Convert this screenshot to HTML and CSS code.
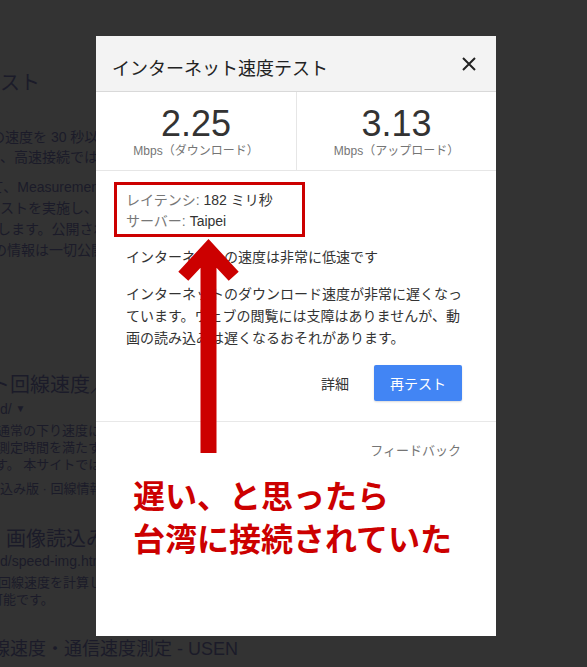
FILE: index.html
```html
<!DOCTYPE html>
<html lang="ja">
<head>
  <meta charset="utf-8">
  <title>インターネット速度テスト</title>
  <link rel="stylesheet" href="styles.css">
</head>
<body>
  <!-- page behind the dialog -->
  <div class="page">
    <div class="h l1">テスト</div>
    <div class="para p1">
      <div class="cut9">の速度を 30 秒以上かけて測定</div>
      <div>、高速接続では</div>
    </div>
    <div class="para p2">
      <div class="cut10">て、Measurement Lab と</div>
      <div>ストを実施し、インター</div>
      <div class="cut3">します。公開され</div>
      <div class="cut7">の情報は一切公開</div>
    </div>
    <div class="h l8 cut10">ト回線速度／通信速</div>
    <div class="url l9">d/ <span class="tri">▼</span></div>
    <div class="small p3">
      <div class="cut3">通常の下り速度に</div>
      <div class="cut3">測定時間を満たす</div>
      <div class="cut5">す。 本サイトでは</div>
    </div>
    <div class="small l13">込み版 · 回線情報</div>
    <div class="h l14">画像読込み版</div>
    <div class="url">d/speed-img.html</div>
    <div class="small p4">
      <div class="cut2">回線速度を計算し</div>
      <div class="cut10">可能です。</div>
    </div>
    <div class="h l18 cut8">線速度・通信速度測定 - USEN</div>
  </div>

  <div class="modal">
    <div class="head">
      <div class="title">インターネット速度テスト</div>
      <svg class="close" width="14" height="14" viewBox="0 0 14 14">
        <path d="M1 1L13 13M13 1L1 13" stroke="#222" stroke-width="2" fill="none"/>
      </svg>
    </div>
    <div class="stats">
      <div class="stat">
        <div class="num">2.25</div>
        <div class="unit">Mbps（ダウンロード）</div>
      </div>
      <div class="stat">
        <div class="num">3.13</div>
        <div class="unit">Mbps（アップロード）</div>
      </div>
    </div>
    <div class="latency">
      <div class="row"><span class="lbl">レイテンシ: </span>182 ミリ秒</div>
      <div class="row"><span class="lbl">サーバー: </span>Taipei</div>
    </div>
    <div class="verdict">インターネットの速度は非常に低速です</div>
    <div class="desc">インターネットのダウンロード速度が非常に遅くなっ<br>ています。ウェブの閲覧には支障はありませんが、動<br>画の読み込みは遅くなるおそれがあります。</div>
    <div class="actions">
      <span class="more">詳細</span>
      <button class="retest">再テスト</button>
    </div>
    <div class="foot">フィードバック</div>
    <div class="note">遅い、と思ったら<br>台湾に接続されていた</div>
  </div>

  <svg class="arrow" width="62" height="216" viewBox="0 0 62 216">
    <polygon fill="#cc0000" points="30.5,1 60.7,33.7 50.7,42.7 38.5,29.7 38.5,215 22.5,215 22.5,29.7 10.3,42.7 0.3,33.7"/>
  </svg>
</body>
</html>
```

FILE: styles.css
```css
body {
  margin: 0;
  height: 667px;
  overflow: hidden;
  background: #333;
  font-family: "Liberation Sans", "Noto Sans CJK JP", sans-serif;
  position: relative;
}

/* background page */
.page {
  color: #1b1b29;
  font-size: 14px;
  white-space: nowrap;
  overflow: hidden;
}
.h {
  font-size: 20px;
  line-height: 24px;
}
.para { line-height: 20px; }
.p1 { margin-top: 32px; }
.p2 { margin-top: 10px; line-height: 21px; }
.l1 { margin-top: 71px; margin-left: -20px; }
.l8 { margin-top: 112px; }
.url { line-height: 20px; }
.l9 { margin-top: 2px; }
.tri { font-size: 10px; vertical-align: 2px; }
.small { font-size: 13px; line-height: 17px; }
.p3 { margin-top: 3px; }
.l13 { margin-top: 7px; }
.l14 { margin-top: 30px; margin-left: 6px; }
.p4 { margin-top: 3px; }
.l18 { margin-top: 29px; font-size: 18px; }
.cut2 { margin-left: -2px; }
.cut3 { margin-left: -3px; }
.cut5 { margin-left: -5px; }
.cut7 { margin-left: -7px; }
.cut8 { margin-left: -8px; }
.cut9 { margin-left: -9px; }
.cut10 { margin-left: -10px; }

/* dialog */
.modal {
  position: absolute;
  left: 96px;
  top: 36px;
  width: 400px;
  height: 600px;
  background: #fff;
  color: #333;
  font-size: 14px;
}
.head {
  height: 56px;
  box-sizing: border-box;
  background: #f3f3f3;
  border-bottom: 1px solid #d9d9d9;
  display: flex;
  align-items: center;
  justify-content: space-between;
  padding: 0 20px 0 16px;
}
.title {
  font-size: 18px;
  color: #222;
  padding-top: 6px;
}
.stats {
  display: grid;
  grid-template-columns: 201px 199px;
  border-bottom: 1px solid #e6e6e6;
}
.stat {
  height: 78px;
  box-sizing: border-box;
  padding-top: 12px;
  text-align: center;
}
.stat:first-child { border-right: 1px solid #e6e6e6; }
.num {
  font-size: 36px;
  line-height: 40px;
  color: #333;
}
.unit {
  font-size: 12px;
  line-height: 14px;
  color: #757575;
}
.latency {
  box-sizing: border-box;
  width: 191px;
  height: 55px;
  margin: 11px 0 0 18px;
  padding: 6px 9px 0;
  border: 3px solid #cc0000;
  color: #333;
}
.row {
  height: 21px;
  line-height: 18px;
}
.lbl { color: #777; }
.verdict {
  margin-top: 10px;
  padding: 0 30px;
  line-height: 21px;
}
.desc {
  margin-top: 15px;
  padding: 0 30px;
  line-height: 22px;
  white-space: nowrap;
}
.actions {
  display: flex;
  justify-content: flex-end;
  align-items: center;
  gap: 25px;
  margin-top: 16px;
  padding-right: 34px;
}
.more { color: #333; }
.retest {
  width: 88px;
  height: 36px;
  border: none;
  border-radius: 2px;
  background: #4285f4;
  color: #fff;
  font-family: inherit;
  font-size: 14px;
  box-shadow: 0 1px 2px rgba(0,0,0,0.15);
}
.foot {
  margin-top: 20px;
  border-top: 1px solid #e8e8e8;
  padding: 19px 35px 0 0;
  text-align: right;
  font-size: 13px;
  line-height: 20px;
  color: #757575;
}
.note {
  margin-top: 15px;
  padding-left: 37px;
  font-size: 32px;
  line-height: 43px;
  font-weight: bold;
  color: #cc0000;
  white-space: nowrap;
}

/* annotation arrow */
.arrow {
  position: absolute;
  left: 178px;
  top: 238px;
}
```
